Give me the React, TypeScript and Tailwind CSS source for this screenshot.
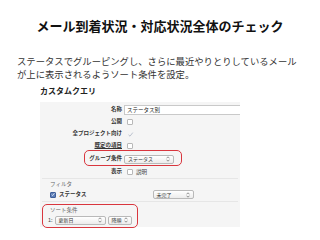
const jp = { fontFamily: '"Noto Sans CJK JP", "Noto Sans", sans-serif' };

function Arrows() {
  return (
    <svg width="4" height="6" viewBox="0 0 4 6" className="shrink-0">
      <path d="M0.5 2.3 L2 0.8 L3.5 2.3" fill="none" stroke="#666" strokeWidth="0.7" />
      <path d="M0.5 3.7 L2 5.2 L3.5 3.7" fill="none" stroke="#666" strokeWidth="0.7" />
    </svg>
  );
}

function Select({ label, w }: { label: string; w: string }) {
  return (
    <div
      className={`${w} h-[9px] flex items-center justify-between px-[3px] rounded-[2px] border border-[#b9b9b9] bg-gradient-to-b from-white to-[#ececec] text-[5px] text-[#333]`}
    >
      <span>{label}</span>
      <Arrows />
    </div>
  );
}

function Box({ checked = false, tick = false }: { checked?: boolean; tick?: boolean }) {
  if (tick) {
    return (
      <svg width="7" height="7" viewBox="0 0 7 7" className="ml-[3px]">
        <path d="M1.5 3.8 L3 5.2 L5.8 1.6" fill="none" stroke="#b5bccb" strokeWidth="0.9" />
      </svg>
    );
  }
  if (checked) {
    return (
      <div className="w-[6px] h-[6px] rounded-[1px] bg-[#5e7fb8] border border-[#3f5f99] flex items-center justify-center">
        <svg width="5" height="5" viewBox="0 0 5 5">
          <path d="M0.8 2.6 L2 3.8 L4.3 0.9" fill="none" stroke="white" strokeWidth="0.9" />
        </svg>
      </div>
    );
  }
  return <div className="ml-[3px] w-[6px] h-[6px] rounded-[1px] bg-white border border-[#b8b8b8]" />;
}

function Row({ label, children, h = "h-[12px]", underline = false }: { label: string; children?: React.ReactNode; h?: string; underline?: boolean }) {
  return (
    <div className={`${h} flex items-center`}>
      <div className="w-[82px] text-right text-[5.5px] font-bold text-[#333] leading-none">
        <span className={underline ? "underline" : ""}>{label}</span>
      </div>
      <div className="ml-[2px] flex-1 flex items-center">{children}</div>
    </div>
  );
}

export default function App() {
  return (
    <div className="w-[320px] h-[240px] bg-white overflow-hidden text-[#222]" style={jp}>
      <h1 className="pt-[18px] text-center text-[13px] leading-[16px] font-bold text-[#111]">
        メール到着状況・対応状況全体のチェック
      </h1>

      <p className="mt-[21px] px-[17px] text-[9.33px] leading-[13px] text-[#333]">
        ステータスでグルーピングし、さらに最近やりとりしているメール
        <br />
        が上に表示されるようソート条件を設定。
      </p>

      <div className="mt-[5px] ml-[40px] text-[8px] leading-[10px] font-bold text-[#222]">カスタムクエリ</div>

      <div className="mt-[5px] ml-[40px] w-[200px] h-[126px] bg-[#f5f5f5] border-t border-white">
        <div className="pt-[2px]">
          <Row label="名称">
            <div className="flex-1 h-[10px] bg-white border-y border-l border-[#c9c9c9] text-[5.5px] leading-[9px] px-[2px] text-[#222]">
              ステータス別
            </div>
          </Row>
          <Row label="公開">
            <Box />
          </Row>
          <Row label="全プロジェクト向け">
            <Box tick />
          </Row>
          <Row label="既定の項目" underline>
            <Box />
          </Row>
          <div className="relative">
            <Row label="グループ条件" h="h-[14px]">
              <Select label="ステータス" w="w-[50px]" />
            </Row>
            <div className="absolute left-[44px] top-[-2px] w-[98px] h-[16px] rounded-[5px] border-[1.5px] border-[#d9363e]" />
          </div>
          <Row label="表示" h="h-[12px]">
            <Box />
            <span className="ml-[3px] text-[5.5px] text-[#444]">説明</span>
          </Row>
        </div>

        <div className="border-t border-[#e6e6e6] mx-[2px]">
          <div className="h-[10px] flex items-center pl-[8px] text-[5.5px] text-[#666]">フィルタ</div>
          <div className="h-[11px] flex items-center pl-[8px]">
            <Box checked />
            <span className="ml-[3px] text-[5.5px] font-bold text-[#333]">ステータス</span>
            <div className="ml-[66px]">
              <Select label="未完了" w="w-[41px]" />
            </div>
          </div>
        </div>

        <div className="relative mt-[1px] border-t border-[#e6e6e6] mx-[2px]">
          <div className="h-[10px] mt-[3px] flex items-center pl-[8px] text-[5.5px] text-[#666]">ソート条件</div>
          <div className="h-[10px] flex items-center pl-[6px] gap-[2px]">
            <span className="text-[5.5px] text-[#444]">1:</span>
            <Select label="更新日" w="w-[51px]" />
            <Select label="降順" w="w-[24px]" />
          </div>
          <div className="absolute left-[0px] top-[2px] w-[96px] h-[24px] rounded-[5px] border-[1.5px] border-[#d9363e]" />
        </div>
      </div>
    </div>
  );
}
